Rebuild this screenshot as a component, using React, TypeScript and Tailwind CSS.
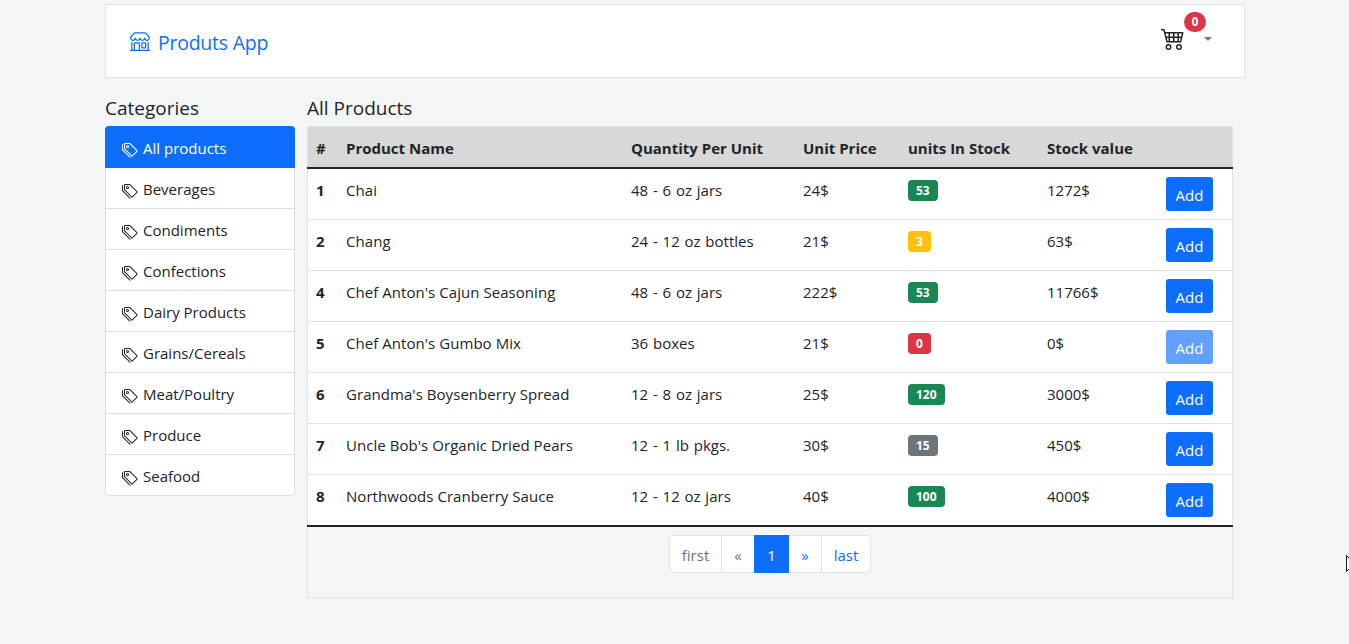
import { BsCart4, BsShop, BsTags } from "react-icons/bs";

const categories = [
  "All products",
  "Beverages",
  "Condiments",
  "Confections",
  "Dairy Products",
  "Grains/Cereals",
  "Meat/Poultry",
  "Produce",
  "Seafood",
];

type Product = { id: number; name: string; qty: string; price: number; stock: number };

const products: Product[] = [
  { id: 1, name: "Chai", qty: "48 - 6 oz jars", price: 24, stock: 53 },
  { id: 2, name: "Chang", qty: "24 - 12 oz bottles", price: 21, stock: 3 },
  { id: 4, name: "Chef Anton's Cajun Seasoning", qty: "48 - 6 oz jars", price: 222, stock: 53 },
  { id: 5, name: "Chef Anton's Gumbo Mix", qty: "36 boxes", price: 21, stock: 0 },
  { id: 6, name: "Grandma's Boysenberry Spread", qty: "12 - 8 oz jars", price: 25, stock: 120 },
  { id: 7, name: "Uncle Bob's Organic Dried Pears", qty: "12 - 1 lb pkgs.", price: 30, stock: 15 },
  { id: 8, name: "Northwoods Cranberry Sauce", qty: "12 - 12 oz jars", price: 40, stock: 100 },
];

const rowGrid =
  "grid grid-cols-[30px_285px_172px_105px_139px_119px_74px] border-x border-[#dee2e6] *:px-2";

function stockColor(stock: number) {
  if (stock === 0) return "bg-[#dc3545]";
  if (stock < 10) return "bg-[#ffc107]";
  if (stock < 20) return "bg-[#6c757d]";
  return "bg-[#198754]";
}

function Header() {
  return (
    <header className="flex h-[74px] items-center justify-between border border-[#dee2e6] bg-white pr-8 pl-6">
      <a className="flex items-center gap-2 text-[#0d6efd]">
        <BsShop className="size-5" />
        <span className="pt-[3px] text-[19.5px] leading-[30px] tracking-[-0.25px]">Produts App</span>
      </a>
      <div className="relative mb-[5px] flex items-center">
        <BsCart4 className="mr-[19px] mb-[2px] size-6" />
        <span className="absolute -top-[14px] left-[23px] flex h-5 w-[22px] items-center justify-center rounded-full bg-[#dc3545] text-[11.5px] font-bold text-white">
          0
        </span>
        <span className="h-0 w-0 border-x-4 border-t-4 border-x-transparent border-t-[#737b80]" />
      </div>
    </header>
  );
}

function Sidebar() {
  return (
    <aside className="w-[190px]">
      <h5 className="mb-[6px] text-[19px] leading-6">Categories</h5>
      <ul className="rounded-[4px] border border-[#dfdfdf] bg-white">
        {categories.map((c, i) => (
          <li
            key={c}
            className={
              i === 0
                ? "-mx-px -mt-px flex h-[42px] items-center gap-[5px] rounded-t-[4px] bg-[#0d6efd] pt-[2px] pl-[17px] text-white"
                : "flex h-[41px] items-center gap-[5px] border-b border-[#dfdfdf] pt-[2px] pl-4 last:h-10 last:border-b-0"
            }
          >
            <BsTags className="mt-[3px] size-4" />
            <span>{c}</span>
          </li>
        ))}
      </ul>
    </aside>
  );
}

function ProductTable() {
  return (
    <div>
      <div className={`${rowGrid} h-[41px] border-t bg-[#d8d8d8] pt-[9px] font-bold`}>
        <span>#</span>
        <span>Product Name</span>
        <span>Quantity Per Unit</span>
        <span>Unit Price</span>
        <span>units In Stock</span>
        <span>Stock value</span>
        <span />
      </div>
      <div className="h-[2px] bg-[#212529]" />
      {products.map((p) => (
        <div key={p.id} className={`${rowGrid} h-[51px] border-b bg-white pt-2 last:h-[50px] last:border-b-0`}>
          <span className="pt-px font-bold">{p.id}</span>
          <span className="pt-px tracking-[0.05px]">{p.name}</span>
          <span className="pt-px [word-spacing:0.9px]">{p.qty}</span>
          <span className="pt-px">{p.price}$</span>
          <span className="flex items-start pt-[3px]">
            <span
              className={`${stockColor(p.stock)} flex h-[21px] items-center rounded-[4px] px-2 pt-px text-[12px] font-bold text-white`}
            >
              {p.stock}
            </span>
          </span>
          <span className="pt-px">{p.price * p.stock}$</span>
          <span>
            <button
              disabled={p.stock === 0}
              className="flex h-[34px] w-[47px] items-center justify-center rounded-[3px] bg-[#0d6efd] pt-[2px] text-white disabled:opacity-65"
            >
              Add
            </button>
          </span>
        </div>
      ))}
    </div>
  );
}

function Pagination() {
  return (
    <div className="flex h-[71px] justify-center border-x border-b border-[#dee2e6] pt-2">
      <nav className="flex h-[38px] *:flex *:items-center *:justify-center *:border-[#dee2e6] *:bg-white *:pt-[2px]">
        <span className="w-[53px] rounded-l-[4px] border text-[#6c757d]">first</span>
        <span className="w-8 border-y text-[#6c757d]">«</span>
        <span className="w-[35px] bg-[#0d6efd]! text-white">1</span>
        <span className="w-8 border-y text-[#0d6efd]">»</span>
        <span className="w-[50px] rounded-r-[4px] border text-[#0d6efd]">last</span>
      </nav>
    </div>
  );
}

export default function App() {
  return (
    <div className="relative h-[644px] overflow-hidden bg-[#f4f6f6] pt-1 pl-[105px] font-['Open_Sans',sans-serif] text-[15px] leading-6 text-[#212529]">
      <div className="w-[1140px]">
        <Header />
        <div className="mt-[18px] flex gap-3">
          <Sidebar />
          <main className="w-[926px]">
            <h5 className="mb-[6px] text-[19px] leading-6">All Products</h5>
            <ProductTable />
            <div className="h-[2px] bg-[#212529]" />
            <Pagination />
          </main>
        </div>
      </div>
      <svg className="absolute top-[555px] left-[1346px]" width="12" height="18" viewBox="0 0 12 18">
        <path d="M.5 .5v16l3.5-3.5 2.5 5 2-1-2.5-5h5z" fill="#fff" stroke="#111827" />
      </svg>
    </div>
  );
}
